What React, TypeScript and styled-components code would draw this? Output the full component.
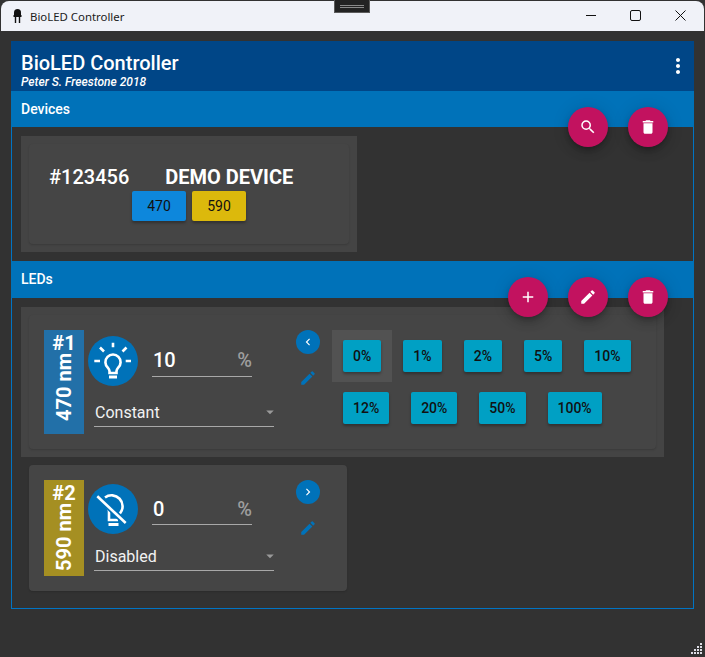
import React from 'react';
import styled, { createGlobalStyle } from 'styled-components';
import {
  MdAdd,
  MdArrowDropDown,
  MdChevronLeft,
  MdChevronRight,
  MdDelete,
  MdEdit,
  MdMoreVert,
  MdSearch,
} from 'react-icons/md';

const BLUE = '#0072b9';
const PINK = '#c2125f';

const GlobalStyle = createGlobalStyle`
  html, body {
    margin: 0;
    padding: 0;
    background: #323232;
    font-family: Roboto, "Liberation Sans", sans-serif;
  }
  * { box-sizing: border-box; }
`;

const Window = styled.div`
  position: relative;
  width: 705px;
  height: 657px;
  overflow: hidden;
  background: #323232;
  display: flex;
  flex-direction: column;
`;

const TitleBar = styled.header`
  height: 30px;
  margin: 1px 1px 0;
  flex: none;
  background: #f0f2f8;
  border-radius: 8px 8px 0 0;
  display: flex;
  align-items: center;
  padding: 0 1px 0 12px;
  color: #1a1a1a;
  font: 11.4px "Noto Sans", sans-serif;
`;

const WindowTitle = styled.span`
  margin-left: 8px;
  flex: 1;
`;

const WindowButton = styled.span`
  width: 45px;
  height: 30px;
  padding-bottom: 2px;
  display: flex;
  align-items: center;
  justify-content: center;
`;

const DragGrip = styled.div`
  position: absolute;
  left: 334px;
  top: 0;
  width: 36px;
  height: 13px;
  background: #232323;
  border: 1px solid #5c5c5c;
  border-top: none;
  display: flex;
  flex-direction: column;
  align-items: center;
  justify-content: center;
  gap: 1px;

  &::before,
  &::after {
    content: '';
    width: 24px;
    height: 1px;
    background: #8a8a8a;
  }
`;

const ResizeGrip = styled.svg`
  position: absolute;
  left: 691px;
  top: 643px;
`;

const Body = styled.main`
  flex: 1;
  padding: 10px 11px 0;
`;

const Panel = styled.div`
  height: 568px;
  border: 1px solid #0074c4;
  border-top: none;
  display: flex;
  flex-direction: column;
`;

const AppHeader = styled.div`
  height: 50px;
  margin: 0 -1px;
  padding: 11px 10px 0;
  background: #004687;
  color: #fff;
  display: flex;
  justify-content: space-between;
`;

const AppTitle = styled.div`
  font-size: 20px;
  font-weight: 500;
  line-height: 23px;
`;

const AppSubtitle = styled.div`
  font-size: 12px;
  font-style: italic;
  font-weight: 500;
  line-height: 13px;
  margin-top: 1px;
`;

const MenuButton = styled.span`
  margin: 2px -6px 0 0;
  font-size: 24px;
  line-height: 24px;
`;

const SectionBar = styled.div<{ $height: number }>`
  position: relative;
  height: ${(p) => p.$height}px;
  flex: none;
  margin: 0 -1px;
  padding-left: 10px;
  background: ${BLUE};
  color: #fff;
  font-size: 14px;
  font-weight: 500;
  line-height: 36px;
`;

const FabGroup = styled.div`
  position: absolute;
  top: 16px;
  right: 26px;
  display: flex;
  gap: 20px;
  z-index: 2;
`;

const Fab = styled.span`
  width: 40px;
  height: 40px;
  border-radius: 50%;
  background: ${PINK};
  color: #fff;
  font-size: 18px;
  display: flex;
  align-items: center;
  justify-content: center;
  box-shadow: 0 3px 5px -1px rgba(0, 0, 0, 0.2), 0 6px 10px 0 rgba(0, 0, 0, 0.14),
    0 1px 18px 0 rgba(0, 0, 0, 0.12);
`;

const Section = styled.section`
  padding: 9px 9px;
  display: flex;
  flex-direction: column;
  align-items: flex-start;
`;

const Frame = styled.div`
  background: #444444;
  padding: 8px;
`;

const Card = styled.div<{ $width: number; $height: number }>`
  width: ${(p) => p.$width}px;
  height: ${(p) => p.$height}px;
  background: #454545;
  border-radius: 4px;
  box-shadow: 0 1px 2px rgba(0, 0, 0, 0.16);
`;

const DeviceHead = styled.div`
  padding: 21px 0 0 20px;
  display: flex;
  gap: 36px;
  color: #fff;
  font-size: 20px;
  line-height: 24px;
  font-weight: 500;
`;

const DeviceName = styled.span`
  font-weight: 700;
`;

const ChipRow = styled.div`
  margin-top: 2px;
  display: flex;
  justify-content: center;
  gap: 6px;
`;

const Chip = styled.span<{ $color: string }>`
  width: 54px;
  height: 30px;
  border-radius: 2px;
  background: ${(p) => p.$color};
  color: #111;
  font-size: 14px;
  display: flex;
  align-items: center;
  justify-content: center;
  box-shadow: 0 2px 3px rgba(0, 0, 0, 0.3);
`;

const LedRow = styled.div`
  height: 100%;
  padding: 15px 0 0 15px;
  display: flex;
  align-items: flex-start;
`;

const Strip = styled.div<{ $color: string; $height: number }>`
  width: 40px;
  height: ${(p) => p.$height}px;
  flex: none;
  background: ${(p) => p.$color};
  color: #fff;
  font-size: 20px;
  font-weight: 700;
  line-height: 24px;
  display: flex;
  flex-direction: column;
  align-items: center;
  padding-top: 1px;
`;

const StripLabel = styled.span`
  writing-mode: vertical-rl;
  transform: rotate(180deg);
  white-space: nowrap;
  margin-top: -2px;
`;

const Controls = styled.div<{ $expanded?: boolean }>`
  width: 186px;
  flex: none;
  margin: ${(p) => (p.$expanded ? 6 : 4)}px 0 0 4px;
`;

const LevelRow = styled.div`
  display: flex;
  align-items: flex-start;
`;

const LedIcon = styled.span`
  width: 50px;
  height: 50px;
  flex: none;
  border-radius: 50%;
  background: ${BLUE};
  display: block;
`;

const LevelField = styled.div<{ $expanded?: boolean }>`
  width: 100px;
  height: 41px;
  margin-left: 14px;
  padding: ${(p) => (p.$expanded ? 12 : 13)}px 0 0 1px;
  border-bottom: 1px solid #a8a8a8;
  display: flex;
  justify-content: space-between;
  color: #fff;
  font-size: 20px;
  font-weight: 500;
  line-height: 24px;
`;

const Unit = styled.span`
  color: #9e9e9e;
`;

const ModeSelect = styled.div<{ $expanded?: boolean }>`
  width: 180px;
  height: 32px;
  margin: ${(p) => (p.$expanded ? 9 : 5)}px 0 0 6px;
  padding: 4px 0 0 1px;
  border-bottom: 1px solid #a8a8a8;
  display: flex;
  align-items: center;
  justify-content: space-between;
  color: #f2f2f2;
  font-size: 16px;

  svg {
    color: #9a9a9a;
    font-size: 18px;
    margin: 0 -5px 2px 0;
  }
`;

const Actions = styled.div`
  width: 24px;
  flex: none;
  margin-left: 22px;
  display: flex;
  flex-direction: column;
  align-items: center;
  gap: 15px;
`;

const RoundButton = styled.span`
  width: 24px;
  height: 24px;
  border-radius: 50%;
  background: ${BLUE};
  color: #fff;
  font-size: 14px;
  display: flex;
  align-items: center;
  justify-content: center;
`;

const EditIcon = styled.span`
  color: ${BLUE};
  font-size: 18px;
  line-height: 18px;
  height: 18px;
`;

const Presets = styled.div`
  width: 320px;
  margin-left: 12px;
  display: flex;
  flex-wrap: wrap;
`;

const PresetCell = styled.div<{ $active?: boolean }>`
  padding: 10px 11px;
  background: ${(p) => (p.$active ? '#525252' : 'transparent')};
`;

const PresetButton = styled.span<{ $width: number }>`
  width: ${(p) => p.$width}px;
  height: 32px;
  border-radius: 2px;
  background: #00a0c4;
  color: #111;
  font-size: 14px;
  font-weight: 500;
  display: flex;
  align-items: center;
  justify-content: center;
  box-shadow: 0 2px 3px rgba(0, 0, 0, 0.3);
`;

const SecondCard = styled(Card)`
  margin: 8px 0 0 8px;
`;

const LedLogo = () => (
  <svg width="9" height="14" viewBox="0 0 9 14">
    <path d="M1 6.5V3.5a3.5 3.5 0 0 1 7 0V6.5z" fill="#111" />
    <rect x="0.5" y="6" width="8" height="2" fill="#111" />
    <rect x="1.8" y="8" width="1.4" height="6" fill="#111" />
    <rect x="5.8" y="8" width="1.4" height="6" fill="#111" />
  </svg>
);

const BulbOn = () => (
  <LedIcon>
    <svg width="50" height="50" viewBox="0 0 50 50" fill="none" stroke="#fff" strokeWidth="2.6">
      <path d="M25 6.7v4.6M6.3 25H12M37.7 25H43M12 11.5l4 4M38.5 11.5l-4 4" />
      <path d="M21.5 37h7v-2c0-1.2.8-2.2 1.6-3.2a7.6 7.6 0 1 0-10.2 0c.8 1 1.6 2 1.6 3.2z" />
      <path d="M21 41h8" strokeWidth="3" />
    </svg>
  </LedIcon>
);

const BulbOff = () => (
  <LedIcon>
    <svg width="50" height="50" viewBox="0 0 50 50" fill="none" stroke="#fff" strokeWidth="2.6">
      <path d="M17 13.5A11 11 0 0 1 32 29.4c-1 1-1.5 2-1.5 3.6" />
      <path d="M17 18c0 4 4 6 4 9v9h9" />
      <path d="M20.5 40.5h10" strokeWidth="3" />
      <path d="M9.3 12.3L37.7 39" stroke="#0072b9" strokeWidth="6" />
      <path d="M9.3 12.3L37.7 39" />
    </svg>
  </LedIcon>
);

const PRESETS = [
  { label: '0%', width: 38.33, active: true },
  { label: '1%', width: 38.33 },
  { label: '2%', width: 38.33 },
  { label: '5%', width: 38.33 },
  { label: '10%', width: 46.2 },
  { label: '12%', width: 46.2 },
  { label: '20%', width: 46.2 },
  { label: '50%', width: 46.2 },
  { label: '100%', width: 54 },
];

const GRIP_DOTS = [
  [9, 0],
  [6, 3],
  [9, 3],
  [3, 6],
  [6, 6],
  [9, 6],
  [0, 9],
  [3, 9],
  [6, 9],
  [9, 9],
];

const App: React.FC = () => {
  return (
    <Window>
      <GlobalStyle />
      <TitleBar>
        <LedLogo />
        <WindowTitle>BioLED Controller</WindowTitle>
        <WindowButton>
          <svg width="10" height="10" viewBox="0 0 10 10" stroke="#111">
            <path d="M0 5.5h10" />
          </svg>
        </WindowButton>
        <WindowButton>
          <svg width="11" height="11" viewBox="0 0 11 11" fill="none" stroke="#111">
            <rect x="0.5" y="0.5" width="10" height="10" rx="1.5" />
          </svg>
        </WindowButton>
        <WindowButton>
          <svg width="11" height="11" viewBox="0 0 11 11" stroke="#111">
            <path d="M0.5 0.5l10 10M10.5 0.5l-10 10" />
          </svg>
        </WindowButton>
      </TitleBar>
      <DragGrip />
      <Body>
        <Panel>
          <AppHeader>
            <div>
              <AppTitle>BioLED Controller</AppTitle>
              <AppSubtitle>Peter S. Freestone 2018</AppSubtitle>
            </div>
            <MenuButton>
              <MdMoreVert />
            </MenuButton>
          </AppHeader>
          <SectionBar $height={36}>
            Devices
            <FabGroup>
              <Fab>
                <MdSearch />
              </Fab>
              <Fab>
                <MdDelete />
              </Fab>
            </FabGroup>
          </SectionBar>
          <Section>
            <Frame>
              <Card $width={320} $height={100}>
                <DeviceHead>
                  <span>#123456</span>
                  <DeviceName>DEMO DEVICE</DeviceName>
                </DeviceHead>
                <ChipRow>
                  <Chip $color="#0d87dc">470</Chip>
                  <Chip $color="#dcb90c">590</Chip>
                </ChipRow>
              </Card>
            </Frame>
          </Section>
          <SectionBar $height={37}>
            LEDs
            <FabGroup>
              <Fab>
                <MdAdd />
              </Fab>
              <Fab>
                <MdEdit />
              </Fab>
              <Fab>
                <MdDelete />
              </Fab>
            </FabGroup>
          </SectionBar>
          <Section>
            <Frame>
              <Card $width={627} $height={134}>
                <LedRow>
                  <Strip $color="#2270a8" $height={104}>
                    #1
                    <StripLabel>470 nm</StripLabel>
                  </Strip>
                  <Controls $expanded>
                    <LevelRow>
                      <BulbOn />
                      <LevelField $expanded>
                        10<Unit>%</Unit>
                      </LevelField>
                    </LevelRow>
                    <ModeSelect $expanded>
                      Constant
                      <MdArrowDropDown />
                    </ModeSelect>
                  </Controls>
                  <Actions>
                    <RoundButton>
                      <MdChevronLeft />
                    </RoundButton>
                    <EditIcon>
                      <MdEdit />
                    </EditIcon>
                  </Actions>
                  <Presets>
                    {PRESETS.map((preset) => (
                      <PresetCell key={preset.label} $active={preset.active}>
                        <PresetButton $width={preset.width}>{preset.label}</PresetButton>
                      </PresetCell>
                    ))}
                  </Presets>
                </LedRow>
              </Card>
            </Frame>
            <SecondCard $width={318} $height={126}>
              <LedRow>
                <Strip $color="#a58f22" $height={96}>
                  #2
                  <StripLabel>590 nm</StripLabel>
                </Strip>
                <Controls>
                  <LevelRow>
                    <BulbOff />
                    <LevelField>
                      0<Unit>%</Unit>
                    </LevelField>
                  </LevelRow>
                  <ModeSelect>
                    Disabled
                    <MdArrowDropDown />
                  </ModeSelect>
                </Controls>
                <Actions>
                  <RoundButton>
                    <MdChevronRight />
                  </RoundButton>
                  <EditIcon>
                    <MdEdit />
                  </EditIcon>
                </Actions>
              </LedRow>
            </SecondCard>
          </Section>
        </Panel>
      </Body>
      <ResizeGrip width="12" height="12" viewBox="0 0 12 12" fill="#dcdce4">
        {GRIP_DOTS.map(([x, y]) => (
          <rect key={`${x}-${y}`} x={x} y={y} width="2" height="2" />
        ))}
      </ResizeGrip>
    </Window>
  );
};

export default App;
